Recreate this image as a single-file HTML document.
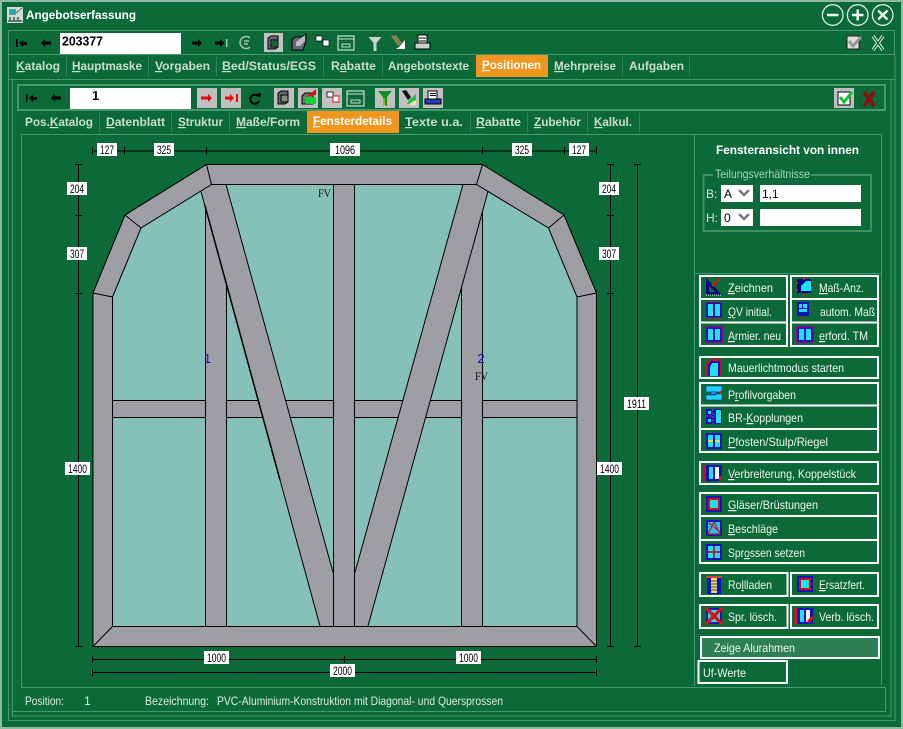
<!DOCTYPE html>
<html lang="de"><head><meta charset="utf-8"><title>Angebotserfassung</title>
<style>
html,body{margin:0;padding:0;background:#0b6a38;width:903px;height:729px;overflow:hidden}
svg{display:block;position:absolute;left:0;top:0}
text{font-family:"Liberation Sans",sans-serif}
.t{font-weight:bold;font-size:12px;fill:#c9ddd0}
.a{font-weight:bold;font-size:12px;fill:#fff}
.b{font-size:12px;fill:#eef5f0}
.d{font-size:12px;fill:#000;text-anchor:middle}
.s{font-size:12px;fill:#dcebe2}
.u{text-decoration:underline}
.f{fill:none;stroke:#459a6d;stroke-width:1}
.w{fill:none;stroke:#fff;stroke-width:2}
.g{fill:#9d9fa2;stroke:#000;stroke-width:1}
.l{stroke:#000;stroke-width:1;fill:none}
.bg{fill:#c0c0c0}
</style></head><body>
<svg width="903" height="729" viewBox="0 0 903 729" xmlns="http://www.w3.org/2000/svg">
<rect width="903" height="729" fill="#0b6a38"/>
<rect x="1" y="1" width="901" height="727" fill="none" stroke="#8fb9a2" stroke-width="2"/>

<!-- title -->
<rect x="7" y="7" width="16" height="16" fill="#cfdcd4"/><rect x="9" y="9" width="7" height="6" fill="#35a6a8"/><path d="M8 21h14M10 17v4M14 17v4M18 17v4" stroke="#3d5a4c" stroke-width="1.500"/><path d="M17 8h5v5z" fill="#d8e2dc"/><path d="M16 13l6-5" stroke="#577"/>
<text x="26" y="19" class="a" textLength="110" lengthAdjust="spacingAndGlyphs">Angebotserfassung</text>
<g fill="none" stroke="#dcEEe3" stroke-width="1.300"><circle cx="832.700" cy="15" r="10.300"/><circle cx="857.700" cy="15" r="10.300"/><circle cx="882.700" cy="15" r="10.300"/></g>
<g stroke="#eef6f1" stroke-width="2.500"><path d="M827 15h11.500M852 15h11.500M857.700 9.500v11M878 10.500l9.500 9M887.500 10.500l-9.500 9"/></g>

<!-- frames -->
<rect x="8.500" y="30.500" width="886" height="24" class="f"/>
<path d="M8.500 55V720.500H895V55M8.500 79.500H895M12.500 79.500V716H891V79.500" class="f"/>
<rect x="18" y="85" width="867" height="25" fill="none" stroke="#459a6d" stroke-width="2"/>
<path d="M21.500 134.500H881.500V686M21.500 134.500V687.500H885.500V711.500H12.500" class="f"/>
<path d="M694.500 135V686M695 273.500H881" class="f"/>

<!-- toolbar 1 -->
<rect x="60" y="33" width="121" height="21" fill="#fff"/>
<text x="62" y="45.500" font-size="13" font-weight="bold" fill="#000" textLength="41" lengthAdjust="spacingAndGlyphs">203377</text>
<g fill="#000">
<path d="M19 43l4-3v2h4v3h-4v2zM16 39h1.500v8H16z" fill="#000"/>
<path d="M41 43l4-4v2.500h6v3h-6v2.500z"/>
<path d="M202 43l-4-4v2.500h-6v3h6v2.500z"/>
<path d="M224 43l-4-4v2.500h-5v3h5v2.500z"/><rect x="226" y="39" width="1.500" height="8" fill="#9cb"/>
</g>
<path d="M250 38a6 6 0 1 0 0 9M244 41h5M244 44h4" fill="none" stroke="#9fc4ae" stroke-width="1.500"/>
<rect x="264" y="33" width="19" height="19" fill="#bfc4c0"/>
<path d="M268 38l3-2h7v11l-3 2h-7zM271 40h7v7h-7z" fill="#667" stroke="#000"/><rect x="272" y="41" width="5" height="5" fill="#0b6a38"/>
<path d="M292 40l3-3h6l5-3v7l-3 9h-11z" fill="#667" stroke="#000"/><path d="M296 42l9-7v6l-5 5h-4z" fill="#bbb"/>
<path d="M316 36h6v5h-6z" fill="#fff" stroke="#111" stroke-width=".7"/><path d="M323 40h6v6h-6z" fill="#fff" stroke="#111" stroke-width=".7"/>
<rect x="338" y="36" width="16" height="14" fill="none" stroke="#c5ded0" stroke-width="1.200"/><path d="M338 39h16M342 44h8v3h-8z" fill="none" stroke="#c5ded0"/>
<path d="M368.500 37h13l-5 6v8h-3v-8z" fill="#c9d4cd"/>
<path d="M391 36l5-1 6 8-4 3z" fill="#8b8150"/><path d="M399 47l6-7v9h-9z" fill="#fff"/>
<path d="M418 35h9v8h-9zM419 38h7M419 41h7" fill="#fff" stroke="#000"/><rect x="415" y="43" width="15" height="6" fill="#c9d4cd" stroke="#000"/>
<rect x="847" y="36" width="12" height="13" fill="#ddd" stroke="#222"/><path d="M849 41l4 5 8-9" stroke="#999" stroke-width="3" fill="none"/>
<path d="M873 36l10 14M883 36l-10 14" stroke="#dfe9e3" stroke-width="3.500"/><path d="M873 36l10 14M883 36l-10 14" stroke="#0b6a38" stroke-width="1.500"/>

<!-- tabs 1 -->
<rect x="476" y="55" width="72" height="22" fill="#f0961e"/>
<path d="M66.500 57v19M148.500 57v19M216.500 57v19M323.500 57v19M382.500 57v19M622.500 57v19M689.500 57v19" stroke="#2f8459" fill="none"/>
<text x="16" y="70" class="t" textLength="44" lengthAdjust="spacingAndGlyphs"><tspan class="u">K</tspan>atalog</text>
<text x="72" y="70" class="t" textLength="70" lengthAdjust="spacingAndGlyphs"><tspan class="u">H</tspan>auptmaske</text>
<text x="155" y="70" class="t" textLength="55" lengthAdjust="spacingAndGlyphs"><tspan class="u">V</tspan>orgaben</text>
<text x="222" y="70" class="t" textLength="94" lengthAdjust="spacingAndGlyphs"><tspan class="u">B</tspan>ed/Status/EGS</text>
<text x="331" y="70" class="t" textLength="45" lengthAdjust="spacingAndGlyphs">R<tspan class="u">a</tspan>batte</text>
<text x="388" y="70" class="t" textLength="81" lengthAdjust="spacingAndGlyphs">Angebotstexte</text>
<text x="482" y="69" class="a" textLength="59" lengthAdjust="spacingAndGlyphs"><tspan class="u">P</tspan>ositionen</text>
<text x="554" y="70" class="t" textLength="62" lengthAdjust="spacingAndGlyphs"><tspan class="u">M</tspan>ehrpreise</text>
<text x="629" y="70" class="t" textLength="55" lengthAdjust="spacingAndGlyphs">Aufgaben</text>

<!-- toolbar 2 -->
<rect x="70" y="88" width="121" height="21" fill="#fff"/>
<text x="92" y="100" font-size="13" font-weight="bold" fill="#000">1</text>
<g fill="#000">
<path d="M29 98l4-3v2h4v3h-4v2zM26 94h1.500v8H26z"/>
<path d="M51 98l4-4v2.500h6v3h-6v2.500z"/>
</g>
<rect x="197" y="88" width="20" height="20" class="bg"/><path d="M212 98l-4-4v2.500h-7v3h7v2.500z" fill="#e01010"/>
<rect x="221" y="88" width="20" height="20" class="bg"/><path d="M234 98l-4-4v2.500h-5v3h5v2.500z" fill="#e01010"/><rect x="236" y="94" width="2" height="8" fill="#e01010"/>
<path d="M258 96a4.500 4.500 0 1 0 1 5" fill="none" stroke="#000" stroke-width="2"/><path d="M255 94l6-1-1 5z" fill="#000"/>
<rect x="274" y="88" width="20" height="20" class="bg"/><path d="M278 93l3-2h7v11l-3 2h-7z" fill="#666" stroke="#000"/><rect x="281" y="95" width="7" height="7" fill="#7f8a80" stroke="#000"/>
<rect x="298" y="88" width="20" height="20" class="bg"/><path d="M302 96l3-3h8v11h-11z" fill="#777" stroke="#000"/><path d="M306 97l10-8v6z" fill="#e01010"/><rect x="306" y="97" width="10" height="7" fill="#10d030"/>
<rect x="322" y="88" width="20" height="20" class="bg"/><path d="M327 92h6v5h-6z" fill="#fff" stroke="#000" stroke-width=".8"/><path d="M333 96h6v6h-6z" fill="#fff" stroke="#d01010" stroke-width=".9"/>
<rect x="347" y="91" width="17" height="15" fill="none" stroke="#c5ded0" stroke-width="1.200"/><path d="M347 94h17M351 100h9v3h-9z" fill="none" stroke="#c5ded0"/>
<rect x="375" y="88" width="20" height="20" class="bg"/><path d="M378 91h14l-5 6v9h-4v-9z" fill="#109020"/><path d="M384 98v8h2" stroke="#ee2" fill="none"/>
<rect x="399" y="88" width="20" height="20" class="bg"/><path d="M402 91l4-1 5 7-3 3z" fill="#111"/><path d="M409 100l7-6v10h-9z" fill="#20c040"/><path d="M410 103l6-3v5h-6z" fill="#efe9a8"/>
<rect x="423" y="88" width="20" height="20" class="bg"/><path d="M428 91h9v8h-9z" fill="#fff" stroke="#000"/><path d="M430 93.500h6M430 95.500h6" stroke="#000"/><rect x="425" y="99" width="16" height="5" fill="#2040c0" stroke="#000"/>
<rect x="834" y="88" width="20" height="20" class="bg"/><rect x="838" y="92" width="12" height="13" fill="#fff" stroke="#000"/><path d="M840 97l4 5 8-10" stroke="#10c030" stroke-width="3" fill="none"/>
<path d="M864 92l10 14M874 92l-10 14" stroke="#8b1010" stroke-width="4"/>

<!-- tabs 2 -->
<rect x="307" y="111" width="92" height="22" fill="#f0961e"/>
<path d="M99.500 113v19M171.500 113v19M229.500 113v19M470.500 113v19M527.500 113v19M587.500 113v19M639.500 113v19" stroke="#2f8459" fill="none"/>
<text x="25" y="126" class="t" textLength="68" lengthAdjust="spacingAndGlyphs">Pos.<tspan class="u">K</tspan>atalog</text>
<text x="106" y="126" class="t" textLength="59" lengthAdjust="spacingAndGlyphs"><tspan class="u">D</tspan>atenblatt</text>
<text x="178" y="126" class="t" textLength="45" lengthAdjust="spacingAndGlyphs"><tspan class="u">S</tspan>truktur</text>
<text x="236" y="126" class="t" textLength="64" lengthAdjust="spacingAndGlyphs"><tspan class="u">M</tspan>aße/Form</text>
<text x="313" y="125" class="a" textLength="79" lengthAdjust="spacingAndGlyphs"><tspan class="u">F</tspan>ensterdetails</text>
<text x="405" y="126" class="t" textLength="58" lengthAdjust="spacingAndGlyphs"><tspan class="u">T</tspan>exte u.a.</text>
<text x="476" y="126" class="t" textLength="45" lengthAdjust="spacingAndGlyphs"><tspan class="u">R</tspan>abatte</text>
<text x="534" y="126" class="t" textLength="47" lengthAdjust="spacingAndGlyphs"><tspan class="u">Z</tspan>ubehör</text>
<text x="594" y="126" class="t" textLength="38" lengthAdjust="spacingAndGlyphs"><tspan class="u">K</tspan>alkul.</text>

<!-- window drawing -->
<path d="M93 293L125 215L206.500 164.500H482.500L564 215L596.500 293V646.500H93Z" fill="#9d9fa2"/>
<path d="M112.500 297L141 228L211.500 184.500H476.500L548.500 228L577 297V626.500H112.500Z" fill="#85c1b9"/>
<path d="M112.500 400.500H577V417.500H112.500Z" class="g"/>
<rect x="205.500" y="190" width="21" height="436.500" class="g"/>
<rect x="333.500" y="184.500" width="21" height="442" class="g"/>
<rect x="461.500" y="190" width="21" height="436.500" class="g"/>
<path d="M201 191.500L211.500 184.500H226L333.500 574V626.500H320Z" fill="#9d9fa2"/>
<path d="M488 191.500L476.500 184.500H463L354.500 574V626.500H368Z" fill="#9d9fa2"/>
<rect x="334" y="560" width="20" height="66" fill="#9d9fa2"/>
<path d="M201 191.500L320 626M226 184.500L333.500 574M463 184.500L354.500 574M488 191.500L368 626" class="l"/>
<path d="M204.800 205L280 480" stroke="#000" stroke-width="1.500"/>
<path d="M333.500 574V626M354.500 574V626" class="l"/>
<path d="M93 293L125 215L206.500 164.500H482.500L564 215L596.500 293V646.500H93Z" fill="none" stroke="#000"/>
<path d="M112.500 297L141 228L211.500 184.500H476.500L548.500 228L577 297V626.500H112.500Z" fill="none" stroke="#000"/>
<path d="M93 293L112.500 297M125 215L141 228M206.500 164.500L211.500 184.500M482.500 164.500L476.500 184.500M564 215L548.500 228M596.500 293L577 297M93 646.500L112.500 626.500M596.500 646.500L577 626.500" class="l"/>
<text x="207.500" y="363" font-size="13" fill="#1010d0" text-anchor="middle">1</text>
<text x="481" y="363" font-size="13" fill="#1010d0" text-anchor="middle">2</text>
<text x="324.500" y="197" font-size="12" style="font-family:'Liberation Serif',serif" fill="#111" text-anchor="middle" textLength="13" lengthAdjust="spacingAndGlyphs">FV</text>
<text x="481.500" y="380" font-size="12" style="font-family:'Liberation Serif',serif" fill="#111" text-anchor="middle" textLength="13" lengthAdjust="spacingAndGlyphs">FV</text>

<!-- dimensions -->
<path d="M92.500 151H597M92.500 147v7M124.500 147v7M206.500 147v7M482.500 147v7M564.500 147v7M596.500 147v7" class="l"/>
<path d="M78.500 164.500V647M75 164.500h7M75 215.500h7M75 293.500h7M75 646.500h7" class="l"/>
<path d="M610.500 164.500V647M607 164.500h7M607 215.500h7M607 293.500h7M607 646.500h7" class="l"/>
<path d="M637.500 164.500V647M634 164.500h7M634 646.500h7" class="l"/>
<path d="M92.500 659.500H597M92.500 656v7M344.500 656v7M596.500 656v7M92.500 672.500H597M92.500 669v7M596.500 669v7" class="l"/>
<g fill="#fff">
<rect x="97" y="143" width="20" height="13"/><rect x="154" y="143" width="20" height="13"/><rect x="330" y="143" width="30" height="13"/><rect x="512" y="143" width="20" height="13"/><rect x="569" y="143" width="20" height="13"/>
<rect x="67" y="182" width="20" height="13"/><rect x="67" y="247" width="20" height="13"/><rect x="65" y="462" width="25" height="13"/>
<rect x="599" y="182" width="20" height="13"/><rect x="599" y="247" width="20" height="13"/><rect x="597" y="462" width="25" height="13"/>
<rect x="624" y="397" width="25" height="13"/>
<rect x="204" y="651" width="25" height="13"/><rect x="456" y="651" width="25" height="13"/><rect x="330" y="664" width="25" height="13"/>
</g>
<text x="107" y="154" class="d" textLength="14" lengthAdjust="spacingAndGlyphs">127</text>
<text x="164" y="154" class="d" textLength="14" lengthAdjust="spacingAndGlyphs">325</text>
<text x="345" y="154" class="d" textLength="20" lengthAdjust="spacingAndGlyphs">1096</text>
<text x="522" y="154" class="d" textLength="14" lengthAdjust="spacingAndGlyphs">325</text>
<text x="579" y="154" class="d" textLength="14" lengthAdjust="spacingAndGlyphs">127</text>
<text x="77" y="193" class="d" textLength="14" lengthAdjust="spacingAndGlyphs">204</text>
<text x="77" y="258" class="d" textLength="14" lengthAdjust="spacingAndGlyphs">307</text>
<text x="77.500" y="473" class="d" textLength="19" lengthAdjust="spacingAndGlyphs">1400</text>
<text x="609" y="193" class="d" textLength="14" lengthAdjust="spacingAndGlyphs">204</text>
<text x="609" y="258" class="d" textLength="14" lengthAdjust="spacingAndGlyphs">307</text>
<text x="609.500" y="473" class="d" textLength="19" lengthAdjust="spacingAndGlyphs">1400</text>
<text x="636.500" y="408" class="d" textLength="19" lengthAdjust="spacingAndGlyphs">1911</text>
<text x="216.500" y="662" class="d" textLength="19" lengthAdjust="spacingAndGlyphs">1000</text>
<text x="468.500" y="662" class="d" textLength="19" lengthAdjust="spacingAndGlyphs">1000</text>
<text x="342.500" y="675" class="d" textLength="19" lengthAdjust="spacingAndGlyphs">2000</text>

<!-- right panel header -->
<text x="716" y="154" class="a" textLength="143" lengthAdjust="spacingAndGlyphs">Fensteransicht von innen</text>
<path d="M713 175H703.500V231H871V175H811" fill="none" stroke="#3f8f66" stroke-width="2"/>
<text x="715" y="178" font-size="12" fill="#a8d4bb" textLength="95" lengthAdjust="spacingAndGlyphs">Teilungsverhältnisse</text>
<text x="706" y="198" font-size="12" fill="#d5e6dc">B:</text>
<text x="706" y="222" font-size="12" fill="#d5e6dc">H:</text>
<rect x="721" y="185" width="32" height="17" fill="#fff"/><rect x="721" y="209" width="32" height="17" fill="#fff"/>
<rect x="760" y="185" width="101" height="17" fill="#fff"/><rect x="760" y="209" width="101" height="17" fill="#fff"/>
<text x="724" y="198" font-size="12" fill="#000">A</text>
<text x="724" y="222" font-size="12" fill="#000">0</text>
<text x="762" y="198" font-size="12" fill="#000">1,1</text>
<path d="M739 190l5 5 5-5M739 214l5 5 5-5" fill="none" stroke="#777" stroke-width="2.500"/>

<!-- buttons -->
<g class="w">
<rect x="700" y="276" width="87" height="70"/><path d="M700 299H787M700 322.500H787"/>
<rect x="791" y="276" width="87" height="70"/><path d="M791 299H878M791 322.500H878"/>
<rect x="700" y="357" width="178" height="21"/>
<rect x="700" y="383" width="178" height="69"/><path d="M700 405.500H878M700 429H878"/>
<rect x="700" y="462" width="178" height="22"/>
<rect x="700" y="493" width="178" height="70"/><path d="M700 516H878M700 540H878"/>
<rect x="700" y="573" width="87.500" height="23"/><rect x="791" y="573" width="87" height="23"/>
<rect x="700" y="605" width="87.500" height="23"/><rect x="791" y="605" width="87" height="23"/>
<rect x="698.500" y="661" width="88.500" height="22"/>
</g>
<rect x="701" y="637" width="178" height="21" fill="#2f7f55" stroke="#fff" stroke-width="2"/>

<!-- button text -->
<text x="728" y="292" class="b" textLength="45" lengthAdjust="spacingAndGlyphs"><tspan class="u">Z</tspan>eichnen</text>
<text x="819" y="292" class="b" textLength="45" lengthAdjust="spacingAndGlyphs"><tspan class="u">M</tspan>aß-Anz.</text>
<text x="728" y="316" class="b" textLength="44" lengthAdjust="spacingAndGlyphs"><tspan class="u">Q</tspan>V initial.</text>
<text x="820" y="316" class="b" textLength="55" lengthAdjust="spacingAndGlyphs">autom. Maß</text>
<text x="728" y="340" class="b" textLength="53" lengthAdjust="spacingAndGlyphs"><tspan class="u">A</tspan>rmier. neu</text>
<text x="819" y="340" class="b" textLength="49" lengthAdjust="spacingAndGlyphs"><tspan class="u">e</tspan>rford. TM</text>
<text x="728" y="372" class="b" textLength="116" lengthAdjust="spacingAndGlyphs">Mauerlichtmodus starten</text>
<text x="728" y="399" class="b" textLength="68" lengthAdjust="spacingAndGlyphs">P<tspan class="u">r</tspan>ofilvorgaben</text>
<text x="728" y="422" class="b" textLength="75" lengthAdjust="spacingAndGlyphs">BR-<tspan class="u">K</tspan>opplungen</text>
<text x="728" y="446" class="b" textLength="100" lengthAdjust="spacingAndGlyphs"><tspan class="u">P</tspan>fosten/Stulp/Riegel</text>
<text x="728" y="478" class="b" textLength="128" lengthAdjust="spacingAndGlyphs"><tspan class="u">V</tspan>erbreiterung, Koppelstück</text>
<text x="728" y="509" class="b" textLength="90" lengthAdjust="spacingAndGlyphs"><tspan class="u">G</tspan>läser/Brüstungen</text>
<text x="728" y="533" class="b" textLength="50" lengthAdjust="spacingAndGlyphs"><tspan class="u">B</tspan>eschläge</text>
<text x="728" y="557" class="b" textLength="77" lengthAdjust="spacingAndGlyphs">Spr<tspan class="u">o</tspan>ssen setzen</text>
<text x="728" y="589" class="b" textLength="44" lengthAdjust="spacingAndGlyphs">Ro<tspan class="u">l</tspan>lladen</text>
<text x="819" y="589" class="b" textLength="46" lengthAdjust="spacingAndGlyphs"><tspan class="u">E</tspan>rsatzfert.</text>
<text x="728" y="621" class="b" textLength="49" lengthAdjust="spacingAndGlyphs">Spr. lösch.</text>
<text x="819" y="621" class="b" textLength="55" lengthAdjust="spacingAndGlyphs">Verb. lösch.</text>
<text x="714" y="652" class="b" textLength="81" lengthAdjust="spacingAndGlyphs">Zeige Alurahmen</text>
<text x="703" y="677" class="b" textLength="43" lengthAdjust="spacingAndGlyphs">Uf-Werte</text>

<!-- button icons -->
<path d="M706 278V295H722ZM709 286V292H716Z" fill="#000080" fill-rule="evenodd"/><path d="M711 286l8-8 1 2-7 7z" fill="#e01010"/><path d="M706 295h16" stroke="#fff" stroke-dasharray="1 1"/>
<rect x="797" y="279" width="14" height="14" fill="#000080"/><path d="M801 291v-5l5-5h5v10z" fill="#22e0f0"/><path d="M796 283h2M804 278v2M813 285h2M804 294v2M796 290h2" stroke="#c02020" stroke-width="2"/>
<rect x="706" y="302" width="16" height="16" fill="#1010c0"/><rect x="708" y="304" width="5" height="12" fill="#22e0f0"/><rect x="715" y="304" width="5" height="12" fill="#22e0f0"/><path d="M706 302h16M706 318h16" stroke="#c02020" stroke-width="1"/>
<rect x="797" y="302" width="12" height="14" fill="#1010c0"/><rect x="799" y="304" width="3" height="4" fill="#22e0f0"/><rect x="803" y="304" width="4" height="4" fill="#22e0f0"/><rect x="799" y="309" width="8" height="3" fill="#22e0f0"/><rect x="811" y="309" width="3" height="2" fill="#c02020"/><rect x="801" y="317" width="3" height="2" fill="#c02020"/>
<rect x="705" y="326" width="18" height="17" fill="#801080"/><rect x="706.500" y="327.500" width="15" height="14" fill="#1010c0"/><rect x="708" y="329" width="5" height="11" fill="#22e0f0"/><rect x="715" y="329" width="5" height="11" fill="#22e0f0"/>
<rect x="796" y="326" width="18" height="17" fill="#801080"/><rect x="797.500" y="327.500" width="15" height="14" fill="#1010c0"/><rect x="799" y="329" width="5" height="11" fill="#22e0f0"/><rect x="806" y="329" width="5" height="11" fill="#22e0f0"/>
<path d="M706 376v-12l4-5h12v17z" fill="#d01010"/><path d="M708 376v-11l3-4h9v15z" fill="#1010c0"/><path d="M710 376v-9l2-4h6v13z" fill="#22e0f0"/>
<path d="M706 386h16v6h-11v2h11v6h-16v-5h10v-3h-10z" fill="#22d0f0" stroke="#1010c0" stroke-width=".5"/><rect x="720" y="391" width="2" height="3" fill="#c02020"/>
<rect x="706" y="409" width="16" height="15" fill="#1010c0"/><rect x="716" y="410" width="5" height="13" fill="#22e0f0"/><rect x="708" y="411" width="3" height="3" fill="#22e0f0"/><rect x="708" y="419" width="3" height="3" fill="#22e0f0"/><path d="M713 409v15M706 416h7" stroke="#e05050" stroke-dasharray="2 1.500"/>
<rect x="706" y="433" width="16" height="16" fill="#1010c0"/><rect x="708" y="435" width="12" height="12" fill="#22e0f0"/><path d="M708 441h12" stroke="#e8e020" stroke-width="2"/><path d="M714 435v12" stroke="#1010c0" stroke-width="2"/>
<rect x="706" y="465" width="16" height="16" fill="#1010c0"/><rect x="704" y="465" width="2" height="16" fill="#d01010"/><rect x="709" y="467" width="4" height="12" fill="#22e0f0"/><rect x="715" y="467" width="4" height="12" fill="#f0f4f4"/><rect x="719" y="476" width="3" height="5" fill="#d01010"/>
<rect x="706" y="496" width="16" height="16" fill="#1010c0"/><rect x="708" y="498" width="12" height="12" fill="#d01010"/><rect x="710" y="500" width="8" height="8" fill="#22e0f0"/>
<rect x="706" y="520" width="16" height="16" fill="#1010c0"/><rect x="708" y="522" width="12" height="12" fill="#22c8e8"/><path d="M708 534L714 522L720 534ZM709 523L720 532" fill="none" stroke="#c02020" stroke-width="1.300"/>
<rect x="706" y="544" width="16" height="16" fill="#1010c0"/><rect x="708" y="546" width="12" height="12" fill="#22e0f0"/><path d="M708 552h12M714 546v12" stroke="#a03040" stroke-width="2"/>
<rect x="707" y="576" width="14" height="18" fill="#1010c0"/><rect x="711" y="578" width="6" height="15" fill="#e8e060"/><path d="M711 581h6M711 584h6M711 587h6M711 590h6" stroke="#444"/><rect x="706" y="576" width="16" height="2" fill="#d04040"/>
<rect x="797" y="576" width="16" height="16" fill="#1010c0"/><rect x="799" y="578" width="12" height="12" fill="#d01010"/><rect x="801" y="580" width="8" height="8" fill="#22e0f0"/>
<rect x="706" y="608" width="16" height="16" fill="#1010c0"/><rect x="708" y="610" width="12" height="12" fill="#22e0f0"/><path d="M706 608l16 16M722 608l-16 16" stroke="#e01010" stroke-width="3.500"/>
<rect x="797" y="608" width="16" height="16" fill="#1010c0"/><rect x="800" y="610" width="4" height="12" fill="#22e0f0"/><rect x="806" y="610" width="4" height="12" fill="#f0f4f4"/><path d="M796 608v16M808 622l5-5" stroke="#e01010" stroke-width="3"/>

<!-- status -->
<text x="25" y="705" class="s" textLength="39" lengthAdjust="spacingAndGlyphs">Position:</text>
<text x="84" y="705" class="s">1</text>
<text x="145" y="705" class="s" textLength="64" lengthAdjust="spacingAndGlyphs">Bezeichnung:</text>
<text x="217" y="705" class="s" textLength="286" lengthAdjust="spacingAndGlyphs">PVC-Aluminium-Konstruktion mit Diagonal- und Quersprossen</text>
</svg>
</body></html>
